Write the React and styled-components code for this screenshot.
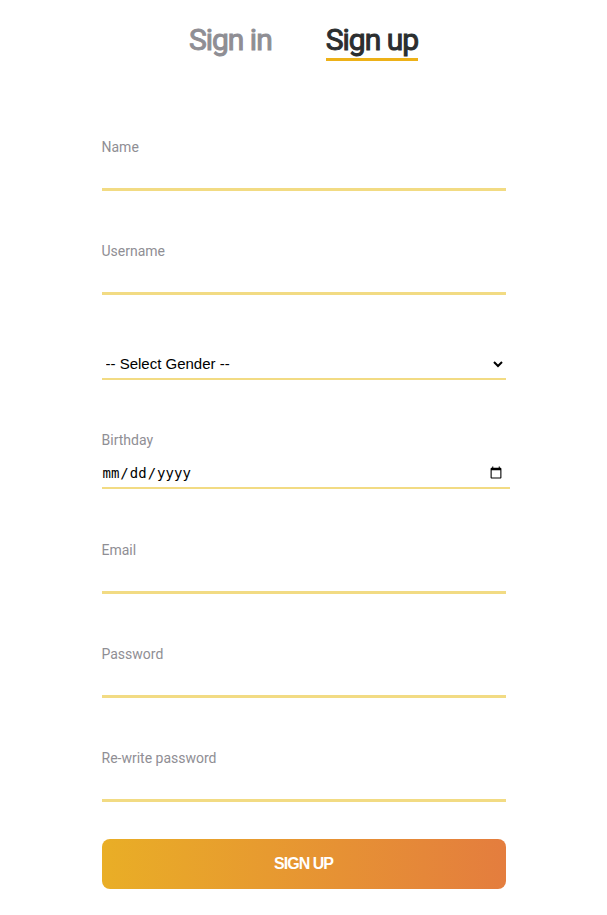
import React from "react";
import styled, { createGlobalStyle } from "styled-components";

const GlobalStyle = createGlobalStyle`
  * { box-sizing: border-box; }
  body { margin: 0; background: #fff; font-family: Roboto, sans-serif; }
`;

const Page = styled.main`
  padding: 20px 24px 24px;
`;

const Tabs = styled.nav`
  display: flex;
  justify-content: center;
  gap: 54px;
`;

const Tab = styled.a`
  height: 41px;
  font-size: 30px;
  line-height: 40px;
  font-weight: 400;
  letter-spacing: -1px;
  -webkit-text-stroke: 1px currentColor;
  text-decoration: none;
  color: ${(p) => (p.$active ? "#2b2e2f" : "#8f8e94")};
  border-bottom: 3px solid ${(p) => (p.$active ? "#edb118" : "transparent")};
`;

const Form = styled.form`
  display: flex;
  flex-direction: column;
  max-width: 404px;
  margin: 76px auto 0;
`;

const Field = styled.div`
  display: flex;
  flex-direction: column;
  margin-bottom: ${(p) => p.$gap || 50}px;
`;

const Label = styled.label`
  font-size: 14px;
  line-height: 20px;
  color: #8f8e94;
`;

const Input = styled.input`
  height: 34px;
  padding: 0;
  border: 0;
  border-bottom: 3px solid #f2db83;
  border-radius: 0;
  background: transparent;
  font: 16px Roboto, sans-serif;
  outline: none;
`;

const Select = styled.select`
  height: 32px;
  padding: 0;
  border: 0;
  border-bottom: 2px solid #f2db83;
  border-radius: 0;
  background: transparent;
  color: #000;
  font: 15px "Liberation Sans", Arial, sans-serif;
  outline: none;
`;

const DateInput = styled.input`
  height: 39px;
  margin-right: -4px;
  padding: 8px 5px 0 0;
  border: 0;
  border-bottom: 2px solid #f2db83;
  background: transparent;
  color: #000;
  font: 14px "DejaVu Sans Mono", monospace;
  outline: none;
`;

const Submit = styled.button`
  height: 50px;
  border: 0;
  border-radius: 8px;
  background: linear-gradient(to right, #e9ae26, #e47d3e);
  color: #fff;
  font: 700 16px "Liberation Sans", Arial, sans-serif;
  letter-spacing: -1px;
  cursor: pointer;
`;

function TextField({ id, label, type = "text", gap }) {
  return (
    <Field $gap={gap}>
      <Label htmlFor={id}>{label}</Label>
      <Input id={id} name={id} type={type} />
    </Field>
  );
}

export default function App() {
  return (
    <Page>
      <GlobalStyle />
      <Tabs>
        <Tab href="#signin">Sign in</Tab>
        <Tab href="#signup" $active aria-current="page">Sign up</Tab>
      </Tabs>
      <Form>
        <TextField id="name" label="Name" />
        <TextField id="username" label="Username" gap={53} />
        <Field>
          <Select id="gender" name="gender" aria-label="Gender" defaultValue="">
            <option value="">-- Select Gender --</option>
            <option value="female">Female</option>
            <option value="male">Male</option>
          </Select>
        </Field>
        <Field $gap={51}>
          <Label htmlFor="birthday">Birthday</Label>
          <DateInput id="birthday" name="birthday" type="date" />
        </Field>
        <TextField id="email" label="Email" />
        <TextField id="password" label="Password" type="password" />
        <TextField id="repassword" label="Re-write password" type="password" gap={37} />
        <Submit type="button">SIGN UP</Submit>
      </Form>
    </Page>
  );
}
